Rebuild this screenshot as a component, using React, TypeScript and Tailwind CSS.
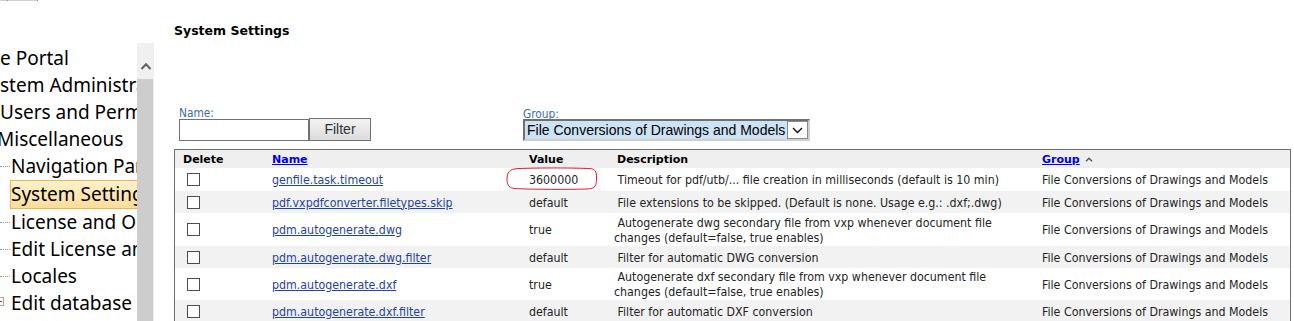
import React from "react";

const body = "font-['DejaVu_Sans_Condensed','DejaVu_Sans',sans-serif]";
const heavy = "font-['DejaVu_Sans',sans-serif] font-bold";
const arial = "font-['Liberation_Sans',Arial,sans-serif]";

type Node = { label: string; child?: boolean; plus?: boolean; selected?: boolean; shift?: string };

const tree: Node[] = [
  { label: "e Portal", shift: "ml-0" },
  { label: "stem Administration", shift: "ml-0" },
  { label: "Users and Permissions", shift: "ml-0" },
  { label: "Miscellaneous", shift: "ml-[-3px]" },
  { label: "Navigation Panel", child: true },
  { label: "System Settings", child: true, selected: true },
  { label: "License and Options", child: true },
  { label: "Edit License and Options", child: true },
  { label: "Locales", child: true },
  { label: "Edit database", plus: true },
];

type Row = { name: string; value: string; desc: string[]; h: string; bg: string; mark?: boolean };

const group = "File Conversions of Drawings and Models";

const rows: Row[] = [
  {
    name: "genfile.task.timeout",
    value: "3600000",
    desc: ["Timeout for pdf/utb/... file creation in milliseconds (default is 10 min)"],
    h: "h-[23px]",
    bg: "bg-white",
    mark: true,
  },
  {
    name: "pdf.vxpdfconverter.filetypes.skip",
    value: "default",
    desc: ["File extensions to be skipped. (Default is none. Usage e.g.: .dxf;.dwg)"],
    h: "h-[22px]",
    bg: "bg-[#f2f2f2]",
  },
  {
    name: "pdm.autogenerate.dwg",
    value: "true",
    desc: ["Autogenerate dwg secondary file from vxp whenever document file", "changes (default=false, true enables)"],
    h: "h-[33px]",
    bg: "bg-white",
  },
  {
    name: "pdm.autogenerate.dwg.filter",
    value: "default",
    desc: ["Filter for automatic DWG conversion"],
    h: "h-[22px]",
    bg: "bg-[#f2f2f2]",
  },
  {
    name: "pdm.autogenerate.dxf",
    value: "true",
    desc: ["Autogenerate dxf secondary file from vxp whenever document file", "changes (default=false, true enables)"],
    h: "h-[32px]",
    bg: "bg-white",
  },
  {
    name: "pdm.autogenerate.dxf.filter",
    value: "default",
    desc: ["Filter for automatic DXF conversion"],
    h: "h-[22px]",
    bg: "bg-[#f2f2f2]",
  },
];

function TreeRow({ node }: { node: Node }) {
  if (node.selected) {
    return (
      <div className="ml-[10px] flex h-[29px] w-[200px] items-center whitespace-nowrap border border-[#f0b550] bg-gradient-to-b from-[#fff1cc] to-[#fcdd98] leading-[27px]">
        {node.label}
      </div>
    );
  }
  if (node.child) {
    return (
      <div className="flex h-[27px] items-center whitespace-nowrap leading-[27px]">
        <span className="w-[10px] shrink-0 border-t border-dotted border-[#9a9a9a]" />
        <span className="pl-px">{node.label}</span>
      </div>
    );
  }
  if (node.plus) {
    return (
      <div className="flex h-[27px] items-center whitespace-nowrap leading-[27px]">
        <span className="relative ml-[-5px] mt-[-4px] h-[9px] w-[9px] shrink-0 border border-[#a6a6a6] bg-white">
          <span className="absolute left-[1px] top-[3px] h-px w-[5px] bg-[#555]" />
          <span className="absolute left-[3px] top-[1px] h-[5px] w-px bg-[#555]" />
        </span>
        <span className="pl-[7px]">{node.label}</span>
      </div>
    );
  }
  return <div className={`h-[27px] whitespace-nowrap leading-[27px] ${node.shift}`}>{node.label}</div>;
}

function Ellipse() {
  return (
    <svg className="pointer-events-none absolute left-[-19px] top-[-1px]" width="92" height="24" viewBox="0 0 92 24">
      <path
        d="M12 1.6 C35 0.6 70 0.9 84 1.6 C89.5 2 90.6 5 90.6 11 C90.6 18 89.5 21.6 82 22 C60 22.6 30 22.4 10 21.7 C3 21.3 1 18 1 12.5 C1 5.5 3 2 12 1.6 Z"
        fill="none"
        stroke="#e01b24"
        strokeWidth="1"
      />
    </svg>
  );
}

export default function App() {
  return (
    <div className="flex h-[321px] w-[1294px] overflow-hidden bg-white">
      {/* navigation tree, scrolled sideways */}
      <aside className="flex w-[154px] shrink-0 flex-col">
        <div className="relative h-px w-[38px] bg-[#cfcfcf]">
          <span className="absolute left-[7px] top-0 h-px w-px bg-[#8a8a8a]" />
          <span className="absolute right-0 top-0 h-px w-px bg-[#8a8a8a]" />
        </div>
        <div className="mt-[42px] flex min-h-0 flex-1">
          <div className="w-[137px] shrink-0 overflow-hidden pt-[2px] font-['Noto_Sans','Open_Sans',sans-serif] text-[19px] text-black">
            {tree.map((n) => (
              <TreeRow key={n.label} node={n} />
            ))}
          </div>
          <div className="flex w-[17px] flex-col bg-[#f0f0f0]">
            <div className="flex h-[36px] items-end justify-center pb-[9px]">
              <svg width="12" height="8" viewBox="0 0 12 8">
                <path d="M1.5 7 L6 2.2 L10.5 7" fill="none" stroke="#606060" strokeWidth="2" />
              </svg>
            </div>
            <div className="mr-px flex-1 bg-[#cdcdcd]" />
          </div>
        </div>
      </aside>

      {/* settings page */}
      <main className="ml-[20px] flex w-[1120px] flex-col">
        <h1 className={`${heavy} mt-[23px] text-[12.5px] leading-[16px] text-black`}>System Settings</h1>
        <div className="mt-[61px] h-px bg-[#d3d3d3]" />

        <div className="mt-[5px] flex items-end">
          <div className="ml-[5px] flex flex-col">
            <label className={`${body} -mb-[4px] text-[11.8px] leading-[17px] text-[#3d6fa8]`}>Name:</label>
            <div className="flex items-end">
              <input className="h-[22px] w-[130px] border border-[#727272] bg-white px-1 outline-none" />
              <button
                className={`${arial} h-[23px] w-[62px] border border-[#707070] bg-gradient-to-b from-[#f3f3f3] to-[#dcdcdc] text-[14px] text-[#333]`}
              >
                Filter
              </button>
            </div>
          </div>
          <div className="ml-[152px] flex flex-col">
            <label className={`${body} -mb-[4px] text-[11.8px] leading-[17px] text-[#3d6fa8]`}>Group:</label>
            <div className="flex h-[22px] w-[287px] border-2 border-[#6f6f6f] border-b-[#cfcfcf] border-r-[#cfcfcf] bg-[#cde2f4]">
              <span className={`${arial} whitespace-nowrap pl-[2px] text-[14px] leading-[18px] text-black`}>{group}</span>
              <span className="ml-auto flex h-full w-[21px] shrink-0 items-center justify-center border border-[#8a8a8a] bg-white">
                <svg width="11" height="7" viewBox="0 0 11 7">
                  <path d="M1 1 L5.5 5.5 L10 1" fill="none" stroke="#111" strokeWidth="1.4" />
                </svg>
              </span>
            </div>
          </div>
        </div>

        <div className="mt-[8px] w-[1117px] border-x border-t border-[#6e6e6e]">
          <table className={`${body} w-[1115px] table-fixed border-collapse text-[12.3px] text-[#242424]`}>
            <colgroup>
              <col className="w-[93px]" />
              <col className="w-[257px]" />
              <col className="w-[88px]" />
              <col className="w-[425px]" />
              <col className="w-[252px]" />
            </colgroup>
            <thead>
              <tr className={`${heavy} h-[18px] bg-[#efefef] text-left text-[11px] leading-[13px] text-black`}>
                <th className="pl-[8px] align-middle font-bold">Delete</th>
                <th className="pl-[4px] align-middle font-bold">
                  <a href="#" className="text-[#0000ee] underline">
                    Name
                  </a>
                </th>
                <th className="pl-[4px] align-middle font-bold">Value</th>
                <th className="pl-[4px] align-middle font-bold">Description</th>
                <th className="pl-[4px] align-middle font-bold">
                  <span className="flex items-center">
                    <a href="#" className="text-[#0000ee] underline">
                      Group
                    </a>
                    <svg className="ml-[5px]" width="8" height="5" viewBox="0 0 8 5">
                      <path d="M1 4.2 L4 1.2 L7 4.2" fill="none" stroke="#555" strokeWidth="1.3" />
                    </svg>
                  </span>
                </th>
              </tr>
            </thead>
            <tbody>
              {rows.map((r) => (
                <tr key={r.name} className={`${r.h} ${r.bg} leading-[15px]`}>
                  <td className="pl-[12px] align-middle">
                    <div className="h-[13px] w-[13px] border border-[#4d4d4d] bg-white" />
                  </td>
                  <td className="pl-[4px] pt-[2px] align-middle">
                    <a href="#" className="whitespace-nowrap text-[#1f43a3] underline">
                      {r.name}
                    </a>
                  </td>
                  <td className="relative pl-[4px] pt-[2px] align-middle">
                    {r.value}
                    {r.mark && <Ellipse />}
                  </td>
                  <td className="pl-px pt-[2px] align-middle">
                    {r.desc.map((line, i) => (
                      <div key={i} className="whitespace-nowrap">
                        {i === 0 ? "\u00a0" + line : line}
                      </div>
                    ))}
                  </td>
                  <td className="whitespace-nowrap pl-[4px] pt-[2px] align-middle">{group}</td>
                </tr>
              ))}
            </tbody>
          </table>
        </div>
      </main>
    </div>
  );
}
